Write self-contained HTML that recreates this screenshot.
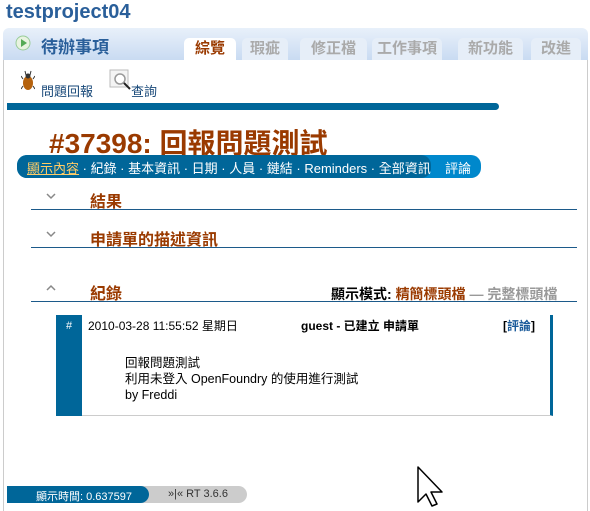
<!DOCTYPE html>
<html><head><meta charset="utf-8"><style>
body{margin:0;width:590px;height:511px;background:#fff;font-family:"Liberation Sans","Noto Sans CJK TC",sans-serif;position:relative;overflow:hidden}
.a{position:absolute;white-space:nowrap}
.tab{position:absolute;top:38px;height:22px;background:#e6eef8;border-radius:5px 5px 0 0;color:#aaa;font-weight:bold;font-size:15px;text-align:center;line-height:22px}
.sec{position:absolute;left:31px;width:546px;border-bottom:1px solid #1c5a8a;height:20px}
.sec .c{position:absolute;left:15px;top:3px}
.sec .t{position:absolute;left:59px;top:-1px;color:#9a3a00;font-weight:bold;font-size:16px}
</style></head><body>
<div class="a" style="left:6px;top:1px;font-size:20px;font-weight:bold;color:#2a5f9a">testproject04</div>
<div class="a" style="left:3px;top:28px;width:585px;height:32px;background:linear-gradient(#e8f0fa,#c9dbf2);border-radius:6px 6px 0 0"></div>
<div class="a" style="left:3px;top:60px;width:1px;height:451px;background:#ccc"></div>
<div class="a" style="left:587px;top:60px;width:1px;height:451px;background:#ccc"></div>
<svg class="a" style="left:15px;top:35px" width="16" height="16"><circle cx="8" cy="8" r="7" fill="#e8f3e0" stroke="#9c9" /><path d="M6 4 L12 8 L6 12Z" fill="#5a5"/></svg>
<div class="a" style="left:41px;top:33px;font-size:17px;font-weight:bold;color:#2a5f9a">待辦事項</div>
<div class="tab" style="left:184px;width:52px;background:#fff;color:#9a3a00">綜覽</div>
<div class="tab" style="left:242px;width:46px">瑕疵</div>
<div class="tab" style="left:300px;width:67px">修正檔</div>
<div class="tab" style="left:372px;width:70px">工作事項</div>
<div class="tab" style="left:458px;width:65px">新功能</div>
<div class="tab" style="left:531px;width:50px">改進</div>
<svg class="a" style="left:21px;top:70px" width="14" height="22"><ellipse cx="7" cy="13" rx="5" ry="7" fill="#b5620e"/><path d="M2 9L0 6M12 9L14 6M2 16L0 19M12 16L14 19M5 5L4 1M9 5L10 1" stroke="#333"/><circle cx="7" cy="6" r="2.5" fill="#333"/></svg>
<div class="a" style="left:41px;top:81px;font-size:13px;color:#1a4a7a">問題回報</div>
<svg class="a" style="left:109px;top:69px" width="22" height="22"><rect x="1" y="1" width="18" height="17" fill="#f4f4f4" stroke="#bbb"/><circle cx="11" cy="10" r="5" fill="#fff" stroke="#999" stroke-width="1.5"/><path d="M15 14L21 20" stroke="#222" stroke-width="2"/></svg>
<div class="a" style="left:131px;top:81px;font-size:13px;color:#1a4a7a">查詢</div>
<div class="a" style="left:7px;top:103px;width:492px;height:7px;background:#006699;border-radius:0 4px 4px 0"></div>
<div class="a" style="left:49px;top:122px;font-size:28px;font-weight:bold;color:#9a3a00">#37398: 回報問題測試</div>
<div class="a" style="left:17px;top:155px;width:464px;height:23px;background:#0088cc;border-radius:10px"></div>
<div class="a" style="left:17px;top:155px;width:414px;height:23px;background:#006699;border-radius:10px"></div>
<div class="a" style="left:27px;top:158px;font-size:13px;color:#fff"><span style="color:#ffcc66;text-decoration:underline">顯示內容</span> · 紀錄 · 基本資訊 · 日期 · 人員 · 鏈結 · Reminders · 全部資訊</div>
<div class="a" style="left:445px;top:158px;font-size:13px;color:#fff">評論</div>
<div class="sec" style="top:189px"><svg class="c" width="10" height="8"><path d="M1 2L5 6L9 2" fill="none" stroke="#888" stroke-width="1.5"/></svg><span class="t">結果</span></div>
<div class="sec" style="top:227px"><svg class="c" width="10" height="8"><path d="M1 2L5 6L9 2" fill="none" stroke="#888" stroke-width="1.5"/></svg><span class="t">申請單的描述資訊</span></div>
<div class="sec" style="top:281px"><svg class="c" width="10" height="8"><path d="M1 6L5 2L9 6" fill="none" stroke="#888" stroke-width="1.5"/></svg><span class="t">紀錄</span></div>
<div class="a" style="left:331px;top:284px;font-size:14px;font-weight:bold">顯示模式: <span style="color:#9a3a00">精簡標頭檔</span> <span style="color:#999">— 完整標頭檔</span></div>
<div class="a" style="left:56px;top:315px;width:494px;height:100px;border-right:3px solid #006699;border-bottom:1px solid #ccc"></div>
<div class="a" style="left:56px;top:315px;width:26px;height:101px;background:#006699;color:#fff;font-size:11px;text-align:center;line-height:22px">#</div>
<div class="a" style="left:88px;top:317px;font-size:12px">2010-03-28 11:55:52 星期日</div>
<div class="a" style="left:301px;top:317px;font-size:12px;font-weight:bold">guest - 已建立 申請單</div>
<div class="a" style="left:503px;top:317px;font-size:12px;font-weight:bold">[<span style="color:#1a5a9a">評論</span>]</div>
<div class="a" style="left:125px;top:355px;font-size:12.5px;line-height:16px">回報問題測試<br>利用未登入 OpenFoundry 的使用進行測試<br>by Freddi</div>
<div class="a" style="left:7px;top:486px;width:240px;height:17px;background:#ccc;border-radius:0 9px 9px 0"></div>
<div class="a" style="left:7px;top:486px;width:142px;height:17px;background:#006699;border-radius:0 9px 9px 0"></div>
<div class="a" style="left:36px;top:488px;font-size:11px;color:#fff">顯示時間: 0.637597</div>
<div class="a" style="left:168px;top:488px;font-size:11px;color:#333">»|« RT 3.6.6</div>
<svg class="a" style="left:417px;top:466px" width="28" height="42"><path d="M1 1 L1 36 L9 28 L15 40 L20 38 L14 26 L25 26 Z" fill="#fff" stroke="#000" stroke-width="1.5" stroke-linejoin="round"/></svg>
</body></html>
